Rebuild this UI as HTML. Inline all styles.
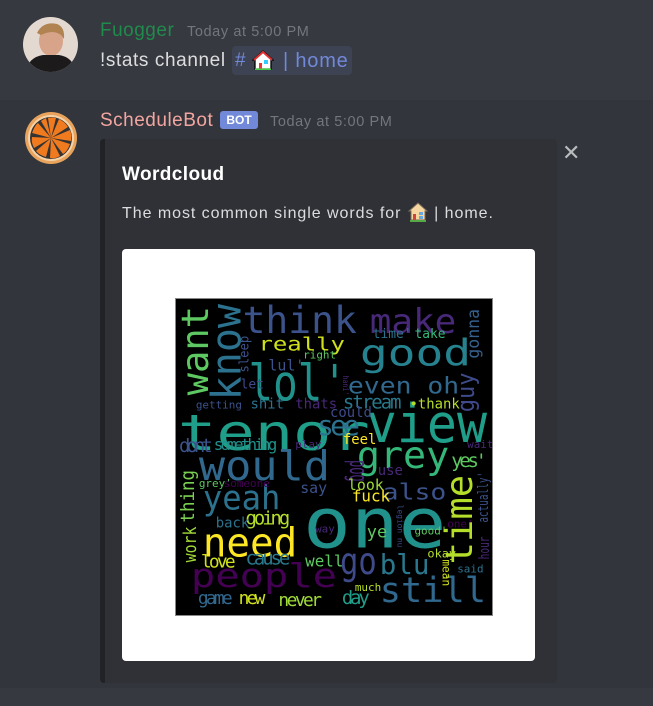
<!DOCTYPE html>
<html><head><meta charset="utf-8"><style>
*{margin:0;padding:0;box-sizing:border-box}
body{width:653px;height:706px;background:#36393f;position:relative;overflow:hidden;font-family:"Liberation Sans","DejaVu Sans",sans-serif}
.abs{position:absolute;white-space:nowrap}
.hover{position:absolute;left:0;top:100px;width:653px;height:588px;background:#32353b}
.name{font-size:19px;letter-spacing:0.5px}
.ts{font-size:14.5px;color:#72767d;letter-spacing:0.6px}
.embed{position:absolute;left:100px;top:139px;width:457px;height:544px;background:#2f3136;border-left:5px solid #202225;border-radius:4px}
.wc text{font-family:"DejaVu Sans Mono","Liberation Mono",monospace}
</style></head><body>
<div class="hover"></div>

<svg class="abs" style="left:23px;top:17px" width="55" height="55" viewBox="0 0 55 55">
<defs><clipPath id="c1"><circle cx="27.5" cy="27.5" r="27.5"/></clipPath></defs>
<g clip-path="url(#c1)"><rect width="55" height="55" fill="#e4d9d0"/>
<ellipse cx="28" cy="24" rx="12" ry="15" fill="#d7a48a"/>
<path d="M14 16 Q20 4 34 7 Q42 10 41 22 L38 18 Q30 12 18 18Z" fill="#b08350"/>
<path d="M2 55 Q6 40 20 38 L36 38 Q50 40 53 55Z" fill="#1c1a1a"/></g></svg>

<div class="abs name" style="left:100px;top:20px;color:#1f8b4c">Fuogger</div>
<div class="abs ts" style="left:187px;top:24px">Today at 5:00 PM</div>
<div class="abs" style="left:100px;top:50px;font-size:19px;color:#dcddde;letter-spacing:0.6px">!stats channel</div>
<div class="abs" style="left:232px;top:46px;width:120px;height:29px;background:rgba(114,137,218,0.12);border-radius:4px"></div>
<div class="abs" style="left:235px;top:50px;font-size:19px;color:#7289da">#</div>
<svg class="abs" style="left:252px;top:49px" width="22" height="22" viewBox="0 0 22 22"><path d="M11 2 L21 11 L19 11 L19 20 L3 20 L3 11 L1 11Z" fill="#fff" stroke="#000" stroke-width="1.3"/><path d="M2 11 L11 3 L20 11" fill="none" stroke="#d33" stroke-width="2"/><rect x="7" y="14" width="3" height="6" fill="#e33"/><rect x="12" y="11" width="4" height="4" fill="#3cf"/><rect x="3" y="19.5" width="16" height="1.5" fill="#4c4"/></svg>
<div class="abs" style="left:283px;top:50px;font-size:20px;color:#7289da;letter-spacing:0.8px">| home</div>

<svg class="abs" style="left:24px;top:111px" width="54" height="54" viewBox="0 0 54 54">
<circle cx="27" cy="27" r="26" fill="#e8a35c"/><circle cx="27" cy="27" r="23" fill="#f6d2a8"/><circle cx="27" cy="27" r="21" fill="#333"/>
<g fill="#f07a1e">
<path d="M27 27 L24 7 Q27 6 32 7Z"/><path d="M27 27 L35 8 Q41 11 44 16Z"/><path d="M27 27 L46 19 Q48 24 47 30Z"/><path d="M27 27 L46 33 Q43 41 39 43Z"/><path d="M27 27 L36 45 Q31 48 26 47Z"/><path d="M27 27 L22 46 Q15 44 12 40Z"/><path d="M27 27 L10 37 Q7 31 8 26Z"/><path d="M27 27 L8 22 Q11 14 14 12Z"/><path d="M27 27 L17 10 Q20 8 22 7Z"/></g></svg>

<div class="abs name" style="left:100px;top:110px;color:#f3a6a0">ScheduleBot</div>
<div class="abs" style="left:220px;top:111px;width:38px;height:18px;background:#7289da;border-radius:3px;color:#fff;font-size:12px;font-weight:bold;text-align:center;line-height:18px">BOT</div>
<div class="abs ts" style="left:270px;top:114px">Today at 5:00 PM</div>

<div class="embed"></div>
<div class="abs" style="left:562px;top:140px;font-size:22px;color:#b9bbbe">✕</div>
<div class="abs" style="left:122px;top:164px;font-size:19px;font-weight:bold;color:#fff;letter-spacing:0.4px">Wordcloud</div>
<div class="abs" style="left:122px;top:205px;font-size:16px;color:#dcddde;letter-spacing:0.95px;display:flex;align-items:center">The most common single words for&nbsp;<svg width="22" height="22" viewBox="0 0 22 22" style="margin-top:-4px"><path d="M11 2 L20 10 L18 10 L18 19 L4 19 L4 10 L2 10Z" fill="#f6d7a0" stroke="#7a6a5a" stroke-width="1"/><rect x="6" y="13" width="3" height="6" fill="#c44"/><rect x="12" y="11" width="4" height="3" fill="#6ad"/><rect x="12" y="15" width="4" height="3" fill="#6ad"/><rect x="3" y="19" width="16" height="2" fill="#5a4"/></svg>&nbsp;| home.</div>

<div class="abs" style="left:122px;top:249px;width:413px;height:412px;background:#fff;border-radius:4px"></div>
<svg class="abs wc" style="left:175px;top:298px;border:1px solid #888" width="318" height="318" viewBox="0 0 318 318">
<rect width="318" height="318" fill="#000"/>
<text x="67" y="34" font-size="38" textLength="115" lengthAdjust="spacingAndGlyphs" fill="#3b528b">think</text>
<text x="195" y="34" font-size="34" textLength="87" lengthAdjust="spacingAndGlyphs" fill="#482878">make</text>
<text x="185" y="67" font-size="37" textLength="112" lengthAdjust="spacingAndGlyphs" fill="#26828e">good</text>
<text x="83" y="52" font-size="19" textLength="87" lengthAdjust="spacingAndGlyphs" fill="#d0e11c">really</text>
<text x="73" y="102" font-size="50" textLength="99" lengthAdjust="spacingAndGlyphs" fill="#21918c">lol'</text>
<text x="173" y="95" font-size="23" textLength="112" lengthAdjust="spacingAndGlyphs" fill="#31688e">even oh</text>
<text x="2" y="152" font-size="50" textLength="193" lengthAdjust="spacingAndGlyphs" fill="#1f9e89">tenor</text>
<text x="192" y="144" font-size="54" textLength="121" lengthAdjust="spacingAndGlyphs" fill="#1f9e89">view</text>
<text x="23" y="182" font-size="41" textLength="132" lengthAdjust="spacingAndGlyphs" fill="#31688e">would</text>
<text x="182" y="170" font-size="38" textLength="93" lengthAdjust="spacingAndGlyphs" fill="#35b779">grey</text>
<text x="27" y="212" font-size="34" textLength="78" lengthAdjust="spacingAndGlyphs" fill="#2c728e">yeah</text>
<text x="208" y="202" font-size="22" textLength="64" lengthAdjust="spacingAndGlyphs" fill="#3b528b">also</text>
<text x="128" y="250" font-size="70" textLength="144" lengthAdjust="spacingAndGlyphs" fill="#21918c">one</text>
<text x="27" y="259" font-size="40" textLength="95" lengthAdjust="spacingAndGlyphs" fill="#fde725">need</text>
<text x="15" y="290" font-size="33" textLength="147" lengthAdjust="spacingAndGlyphs" fill="#440154">people</text>
<text x="165" y="277" font-size="38" textLength="37" lengthAdjust="spacingAndGlyphs" fill="#3e4a89">go</text>
<text x="205" y="277" font-size="28" textLength="50" lengthAdjust="spacingAndGlyphs" fill="#2a788e">blu</text>
<text x="205" y="305" font-size="35" textLength="107" lengthAdjust="spacingAndGlyphs" fill="#31688e">still</text>
<text transform="translate(298,267) rotate(-90)" font-size="38" textLength="90" lengthAdjust="spacingAndGlyphs" fill="#b5de2b">time</text>
<text transform="translate(32,97) rotate(-90)" font-size="38" textLength="90" lengthAdjust="spacingAndGlyphs" fill="#5ec962">want</text>
<text transform="translate(65,102) rotate(-90)" font-size="41" textLength="97" lengthAdjust="spacingAndGlyphs" fill="#2c728e">know</text>
<text transform="translate(300,114) rotate(-90)" font-size="24" textLength="40" lengthAdjust="spacingAndGlyphs" fill="#3e4a89">guy</text>
<text transform="translate(305,60) rotate(-90)" font-size="17" textLength="50" lengthAdjust="spacingAndGlyphs" fill="#35608d">gonna</text>
<text transform="translate(18,225) rotate(-90)" font-size="19" textLength="53" lengthAdjust="spacingAndGlyphs" fill="#7ad151">thing</text>
<text transform="translate(20,265) rotate(-90)" font-size="18" textLength="36" lengthAdjust="spacingAndGlyphs" fill="#a0da39">work</text>
<text transform="translate(315,262) rotate(-90)" font-size="14" textLength="23" lengthAdjust="spacingAndGlyphs" fill="#482878">hour</text>
<text transform="translate(314,225) rotate(-90)" font-size="14" textLength="51" lengthAdjust="spacingAndGlyphs" fill="#3b528b">actually'</text>
<text transform="translate(175,162) rotate(90)" font-size="26" textLength="22" lengthAdjust="spacingAndGlyphs" fill="#482878">pog</text>
<text transform="translate(268,262) rotate(90)" font-size="12" textLength="27" lengthAdjust="spacingAndGlyphs" fill="#d0e11c">mean</text>
<text transform="translate(223,207) rotate(90)" font-size="8" textLength="43" lengthAdjust="spacingAndGlyphs" fill="#3e4a89">legion nu</text>
<text transform="translate(73,74) rotate(-90)" font-size="13" textLength="37" lengthAdjust="spacingAndGlyphs" fill="#3b528b">sleep</text>
<text transform="translate(168,77) rotate(90)" font-size="8" textLength="20" lengthAdjust="spacingAndGlyphs" fill="#482878">hani'</text>
<g font-size="13">
<text x="198" y="39" font-size="13" fill="#2c728e">time'</text>
<text x="240" y="39" font-size="13" fill="#35b779">take</text>
<text x="128" y="60" font-size="11" fill="#5ec962">right</text>
<text x="93" y="72" font-size="15" fill="#3b528b">lul'</text>
<text x="65" y="90" font-size="13" fill="#3e4a89">let</text>
<text x="168" y="110" font-size="19" textLength="59" fill="#2a788e">stream</text>
<text x="235" y="110" font-size="14" fill="#b5de2b">•thank</text>
<text x="20" y="110" font-size="11" fill="#3b528b">getting</text>
<text x="75" y="110" font-size="14" fill="#2c728e">shit</text>
<text x="120" y="110" font-size="14" fill="#482878">thats</text>
<text x="155" y="119" font-size="14" fill="#3e4a89">could</text>
<text x="142" y="137" font-size="28" textLength="43" fill="#2c728e">see</text>
<text x="168" y="146" font-size="14" fill="#fde725">feel</text>
<text x="3" y="154" font-size="19" textLength="34" fill="#3b528b">dont</text>
<text x="38" y="152" font-size="16" textLength="64" fill="#21918c">something</text>
<text x="120" y="150" font-size="11" fill="#482878">play</text>
<text x="293" y="150" font-size="11" fill="#482878">wait</text>
<text x="277" y="169" font-size="19" textLength="36" fill="#5ec962">yes'</text>
<text x="203" y="177" font-size="14" fill="#482878">use</text>
<text x="23" y="189" font-size="11" fill="#5ec962">grey'</text>
<text x="48" y="189" font-size="11" fill="#440154">someone</text>
<text x="125" y="195" font-size="15" fill="#3b528b">say</text>
<text x="173" y="192" font-size="15" fill="#a0da39">look</text>
<text x="177" y="204" font-size="16" fill="#fde725">fuck</text>
<text x="70" y="227" font-size="19" textLength="45" fill="#b5de2b">going</text>
<text x="40" y="230" font-size="14" fill="#2c728e">back</text>
<text x="140" y="235" font-size="11" fill="#482878">way</text>
<text x="192" y="240" font-size="17" fill="#5ec962">ye</text>
<text x="240" y="237" font-size="11" fill="#5ec962">good'</text>
<text x="273" y="230" font-size="11" fill="#440154">one'</text>
<text x="253" y="260" font-size="12" fill="#b5de2b">okay</text>
<text x="70" y="267" font-size="19" textLength="45" fill="#2a788e">cause</text>
<text x="25" y="270" font-size="18" textLength="35" fill="#d0e11c">love</text>
<text x="130" y="269" font-size="16" fill="#5ec962">well</text>
<text x="283" y="275" font-size="11" fill="#2c728e">said</text>
<text x="180" y="294" font-size="11" fill="#b5de2b">much</text>
<text x="22" y="307" font-size="18" textLength="35" fill="#31688e">game</text>
<text x="63" y="307" font-size="18" textLength="27" fill="#d0e11c">new</text>
<text x="103" y="309" font-size="18" textLength="44" fill="#a0da39">never</text>
<text x="167" y="307" font-size="19" textLength="28" fill="#1f9e89">day</text>
</g>
</svg>
</body></html>
